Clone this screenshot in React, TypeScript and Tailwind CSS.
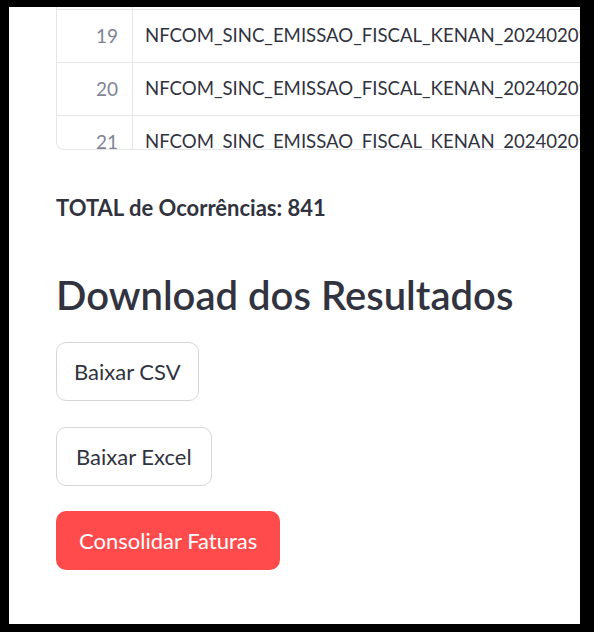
import React from "react";

const font = { fontFamily: '"Source Sans Pro", Lato, "Noto Sans", sans-serif' };

const rows = [19, 20, 21];

export default function App() {
  return (
    <div className="w-[594px] h-[632px] bg-black pt-[7px] pl-[9px] pr-[14px] pb-[8px]">
      <div
        className="w-full h-full bg-white overflow-hidden pl-[47px] flex flex-col text-[#31333f]"
        style={font}
      >
        <div className="w-[700px] h-[143px] shrink-0 border-l border-b border-r border-[#e6e6ea] rounded-b-lg overflow-hidden">
          <div className="h-[2px] flex">
            <div className="w-[76px] border-r border-[#e6e6ea]" />
          </div>
          {rows.map((n) => (
            <div key={n} className="h-[53px] flex border-t border-[#e6e6ea]">
              <div className="w-[76px] shrink-0 border-r border-[#e6e6ea] flex items-center justify-end pr-[14px] text-[19px] text-[#808495]">
                {n}
              </div>
              <div className="flex items-center pl-[12px] text-[18.6px] whitespace-nowrap">
                NFCOM_SINC_EMISSAO_FISCAL_KENAN_20240209
              </div>
            </div>
          ))}
        </div>

        <div className="mt-[43px] h-[30px] leading-[30px] text-[22px] font-bold">
          TOTAL de Ocorrências: 841
        </div>

        <div className="mt-[47px] h-[50px] leading-[50px] text-[40px] font-semibold">
          Download dos Resultados
        </div>

        <div className="mt-[22px] flex flex-col items-start gap-[26px]">
          <button className="h-[59px] px-[17px] rounded-[10px] border border-[#d6d6d9] bg-white text-[22px] text-[#31333f]">
            Baixar CSV
          </button>
          <button className="h-[59px] px-[19px] rounded-[10px] border border-[#d6d6d9] bg-white text-[22px] text-[#31333f]">
            Baixar Excel
          </button>
          <button className="-mt-[1px] h-[59px] px-[23px] rounded-[10px] bg-[#ff4b4b] text-[22px] text-white">
            Consolidar Faturas
          </button>
        </div>
      </div>
    </div>
  );
}
